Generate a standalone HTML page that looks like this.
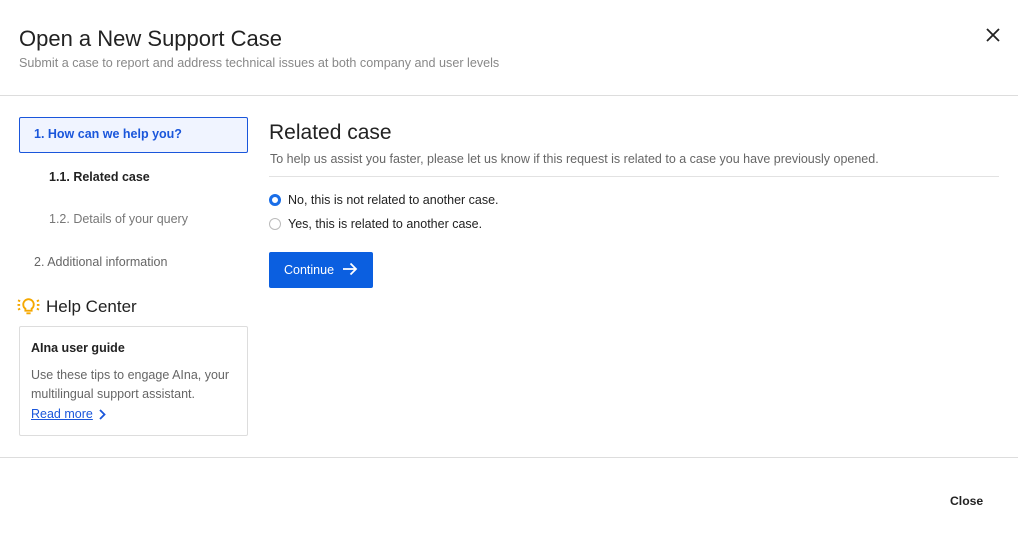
<!DOCTYPE html>
<html><head><style>
*{box-sizing:border-box;margin:0;padding:0}
body{width:1018px;height:543px;background:#fff;font-family:"Liberation Sans",sans-serif;position:relative;overflow:hidden;color:#222}
.a{position:absolute;white-space:nowrap}
</style></head><body>
<div class="a" style="left:19px;top:26px;font-size:22px;color:#222">Open a New Support Case</div>
<div class="a" style="left:19px;top:56px;font-size:12.6px;color:#888">Submit a case to report and address technical issues at both company and user levels</div>
<svg class="a" style="left:986px;top:28px" width="14" height="14" viewBox="0 0 14 14"><path d="M1 1L13 13M13 1L1 13" stroke="#222" stroke-width="1.8"/></svg>
<div class="a" style="left:0;top:95px;width:1018px;height:1px;background:#ddd"></div>

<div class="a" style="left:19px;top:117px;width:229px;height:36px;border:1px solid #1a56db;background:#f0f4ff;border-radius:2px"></div>
<div class="a" style="left:34px;top:127px;font-size:12.5px;font-weight:bold;color:#1a56db">1. How can we help you?</div>
<div class="a" style="left:49px;top:170px;font-size:12.5px;font-weight:bold;color:#222">1.1. Related case</div>
<div class="a" style="left:49px;top:212px;font-size:12.5px;color:#777">1.2. Details of your query</div>
<div class="a" style="left:34px;top:255px;font-size:12.5px;color:#666">2. Additional information</div>
<svg class="a" style="left:17px;top:295px" width="23" height="22" viewBox="0 0 22 20"><g stroke="#f5a800" stroke-width="1.8" fill="none"><path d="M8 14.5V12.5C6 11.5 6 9.5 6 8.5A5 5 0 0 1 16 8.5C16 9.5 16 11.5 14 12.5V14.5H8Z"/><path d="M9 17H13"/><path d="M1 4.5L3 5.5M0.5 9H3M1 13.5L3 12.5M21 4.5L19 5.5M21.5 9H19M21 13.5L19 12.5"/></g></svg>
<div class="a" style="left:46px;top:297px;font-size:17px;color:#222">Help Center</div>
<div class="a" style="left:19px;top:326px;width:229px;height:110px;border:1px solid #ddd;border-radius:2px"></div>
<div class="a" style="left:31px;top:341px;font-size:12.5px;font-weight:bold;color:#222">AIna user guide</div>
<div class="a" style="left:31px;top:366px;font-size:12.5px;color:#666;line-height:19px">Use these tips to engage AIna, your<br>multilingual support assistant.</div>
<div class="a" style="left:31px;top:407px;font-size:12.5px;color:#1a56db;text-decoration:underline">Read more</div>
<svg class="a" style="left:97px;top:408px" width="10" height="13" viewBox="0 0 10 13"><path d="M3 2L7.5 6.5L3 11" stroke="#1a56db" stroke-width="1.8" fill="none"/></svg>

<div class="a" style="left:269px;top:121px;font-size:21px;color:#222">Related case</div>
<div class="a" style="left:270px;top:152px;font-size:12.5px;color:#666">To help us assist you faster, please let us know if this request is related to a case you have previously opened.</div>
<div class="a" style="left:269px;top:176px;width:730px;height:1px;background:#e2e2e2"></div>
<div class="a" style="left:269px;top:194px;width:12px;height:12px;border-radius:50%;border:3.5px solid #1a6ee8;background:#fff"></div>
<div class="a" style="left:288px;top:193px;font-size:12.5px;color:#222">No, this is not related to another case.</div>
<div class="a" style="left:269px;top:218px;width:12px;height:12px;border-radius:50%;border:1px solid #bbb;background:#fff"></div>
<div class="a" style="left:288px;top:217px;font-size:12.5px;color:#222">Yes, this is related to another case.</div>
<div class="a" style="left:269px;top:252px;width:104px;height:36px;background:#0b5fe0;border-radius:2px"></div>
<div class="a" style="left:284px;top:263px;font-size:12.5px;color:#fff">Continue</div>
<svg class="a" style="left:342px;top:262px" width="16" height="14" viewBox="0 0 16 14"><path d="M1 7H14M8.5 1.5L14 7L8.5 12.5" stroke="#fff" stroke-width="1.8" fill="none"/></svg>

<div class="a" style="left:0;top:457px;width:1018px;height:1px;background:#ddd"></div>
<div class="a" style="left:950px;top:494px;font-size:12.2px;font-weight:bold;color:#222">Close</div>
</body></html>
